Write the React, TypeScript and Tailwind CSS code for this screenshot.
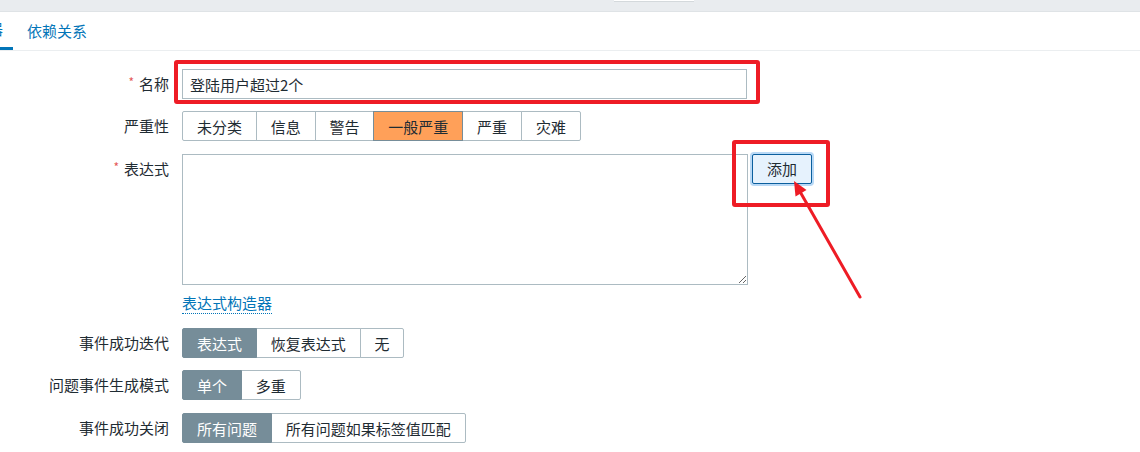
import { useState } from "react";

const font = { fontFamily: '"Noto Sans CJK SC", "Noto Sans", sans-serif' };

interface SegmentProps {
  items: string[];
  selected: number;
  tone?: "gray" | "orange";
}

function Segment({ items, selected, tone = "gray" }: SegmentProps) {
  return (
    <div className="flex">
      {items.map((item, i) => {
        const active = i === selected;
        const first = i === 0;
        const last = i === items.length - 1;
        let cls = "relative h-[30px] px-[13.9px] border flex items-center text-[15px] leading-none ";
        if (!first) cls += "-ml-px ";
        if (first) cls += "rounded-l-[2px] ";
        if (last) cls += "rounded-r-[2px] ";
        if (active && tone === "orange") cls += "z-10 bg-[#ffa059] border-[#768d99] text-[#1f2c33]";
        else if (active) cls += "z-10 bg-[#768d99] border-[#768d99] text-white";
        else cls += "bg-white border-[#acbbc2] text-[#1f2c33]";
        return (
          <div key={item} className={cls}>
            {item}
          </div>
        );
      })}
    </div>
  );
}

function Label({ text, required }: { text: string; required?: boolean }) {
  return (
    <div className="w-[169px] shrink-0 text-right text-[15px] text-[#1f2c33] leading-[30px]">
      {required && <span className="text-[#e45959] text-[12px] align-top relative top-[-2px] mr-[5px]">*</span>}
      {text}
    </div>
  );
}

export default function App() {
  const [name, setName] = useState("登陆用户超过2个");

  return (
    <div className="relative w-[1140px] h-[452px] bg-white overflow-hidden" style={font}>
      {/* top strip */}
      <div className="h-[12px] bg-[#e9ecef] border-b border-[#dfe3e6] relative">
        <div className="absolute left-[614px] top-0 w-[80px] h-[2px] bg-white border-b border-[#d4d9dc]" />
      </div>

      {/* tabs */}
      <div className="flex h-[39px] border-b border-[#ebeef0]">
        <div className="ml-[-52px] pl-[10px] pr-[10px] flex items-center border-b-[3px] border-[#0275b8] text-[15px] text-[#0275b8]">
          触发器
        </div>
        <div className="pl-[14px] flex items-center text-[15px] text-[#0275b8]">依赖关系</div>
      </div>

      {/* form */}
      <div className="pt-[18px]">
        <div className="flex">
          <Label text="名称" required />
          <div className="ml-[13px] relative">
            <input
              value={name}
              onChange={(e) => setName(e.target.value)}
              className="w-[565px] h-[30px] border border-[#acbbc2] px-[7px] text-[15px] text-[#1f2c33] outline-none"
              style={font}
            />
            <div className="absolute -left-[8px] -top-[9px] -right-[13px] -bottom-[5px] border-[4px] border-[#ee1c25] rounded-[3px] pointer-events-none" />
          </div>
        </div>

        <div className="flex mt-[12px]">
          <Label text="严重性" />
          <div className="ml-[13px]">
            <Segment items={["未分类", "信息", "警告", "一般严重", "严重", "灾难"]} selected={3} tone="orange" />
          </div>
        </div>

        <div className="flex mt-[13px]">
          <Label text="表达式" required />
          <div className="ml-[13px]">
            <textarea className="block w-[566px] h-[131px] border border-[#acbbc2] outline-none" />
            <div className="mt-[5px]">
              <span className="inline-block text-[15px] leading-[20px] text-[#0275b8] border-b border-dotted border-[#0275b8]">
                表达式构造器
              </span>
            </div>
          </div>
          <div className="ml-[4px] relative self-start">
            <button className="w-[60px] h-[30px] rounded-[2px] border border-[#0b5f9e] bg-[#e6f2fd] shadow-[0_0_0_2px_#b9d9f6] text-[15px] text-[#1f2c33]">
              添加
            </button>
            <div className="absolute -left-[20px] -top-[14px] -right-[18px] -bottom-[23px] border-[4px] border-[#ee1c25] rounded-[3px] pointer-events-none" />
          </div>
        </div>

        <div className="flex mt-[14px]">
          <Label text="事件成功迭代" />
          <div className="ml-[13px]">
            <Segment items={["表达式", "恢复表达式", "无"]} selected={0} />
          </div>
        </div>

        <div className="flex mt-[12px]">
          <Label text="问题事件生成模式" />
          <div className="ml-[13px]">
            <Segment items={["单个", "多重"]} selected={0} />
          </div>
        </div>

        <div className="flex mt-[13px]">
          <Label text="事件成功关闭" />
          <div className="ml-[13px]">
            <Segment items={["所有问题", "所有问题如果标签值匹配"]} selected={0} />
          </div>
        </div>
      </div>

      {/* annotation arrow */}
      <svg className="absolute left-0 top-0 pointer-events-none" width="1140" height="452">
        <line x1="860" y1="297" x2="800.5" y2="192.5" stroke="#ee1c25" strokeWidth="3" strokeLinecap="round" />
        <polygon points="794,181 806.5,190 795.5,196.5" fill="#ee1c25" />
      </svg>
    </div>
  );
}
